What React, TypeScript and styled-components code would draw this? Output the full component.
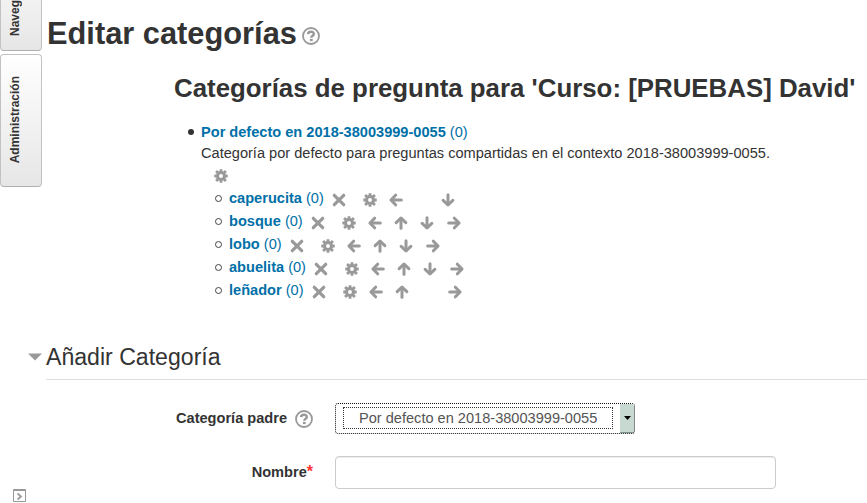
import React from "react";
import styled, { createGlobalStyle } from "styled-components";

const Global = createGlobalStyle`
  * { box-sizing: border-box; }
  html, body { margin: 0; height: 503px; overflow: hidden; background: #fff; }
  body { font: 14.58px/20px "Liberation Sans", Arial, sans-serif; color: #333; }
`;

const Page = styled.div`
  display: flex;
  height: 503px;
  overflow: hidden;
`;

const Dock = styled.aside`
  width: 46px;
  flex: none;
  display: flex;
  flex-direction: column;
`;

const DockTab = styled.div<{ $height: number; $first?: boolean }>`
  width: 42px;
  height: ${(p) => p.$height}px;
  margin-bottom: 3px;
  padding-left: 7px;
  display: flex;
  align-items: center;
  justify-content: flex-start;
  border: 1px solid #c2c2c2;
  border-top-width: ${(p) => (p.$first ? 0 : 1)}px;
  border-bottom-color: #b0b0b0;
  border-radius: ${(p) => (p.$first ? "0 0 4px 4px" : "4px")};
  background: linear-gradient(${(p) => (p.$first ? "#f2f2f2" : "#fff")}, #e6e6e6);
`;

const DockTitle = styled.span<{ $end?: boolean }>`
  writing-mode: vertical-rl;
  transform: rotate(180deg);
  align-self: ${(p) => (p.$end ? "flex-end" : "center")};
  padding: ${(p) => (p.$end ? "14px 0 0" : "2px 0 0")};
  font-size: 12px;
  line-height: 14px;
  font-weight: bold;
  white-space: nowrap;
`;

const DockFooter = styled.div`
  margin: auto 0 1px 13px;
  height: 13px;
  svg { display: block; }
`;

const Main = styled.main`
  flex: 1;
  min-width: 0;
`;

const PageTitle = styled.h1`
  display: flex;
  align-items: center;
  gap: 5px;
  height: 40px;
  margin: 14px 0 0 1px;
  font-size: 30.8px;
  line-height: 40px;
  white-space: nowrap;
  svg { margin-top: 4px; }
`;

const SectionTitle = styled.h2`
  margin: 14px 0 0 128px;
  font-size: 25.85px;
  line-height: 40px;
  white-space: nowrap;
`;

const RootCategory = styled.section`
  display: grid;
  grid-template-columns: 13px 1fr;
  margin: 14px 0 0 142px;
`;

const Bullet = styled.i<{ $hollow?: boolean }>`
  flex: none;
  width: ${(p) => (p.$hollow ? 7 : 6)}px;
  height: ${(p) => (p.$hollow ? 7 : 6)}px;
  margin-top: ${(p) => (p.$hollow ? 2 : 7)}px;
  border-radius: 50%;
  border: ${(p) => (p.$hollow ? "1px solid #444" : "0")};
  background: ${(p) => (p.$hollow ? "transparent" : "#333")};
`;

const CategoryLink = styled.a`
  color: #0070a8;
  white-space: pre;
`;

const Description = styled.p`
  margin: 1px 0 0;
  white-space: nowrap;
`;

const RootTools = styled.div`
  height: 23px;
  padding: 6px 0 0 13px;
  svg { display: block; }
`;

const CategoryList = styled.ul`
  list-style: none;
  margin: 0;
  padding: 0 0 0 14px;
`;

const CategoryRow = styled.li`
  display: flex;
  align-items: center;
  height: 23px;
  ${CategoryLink} { margin: 0 8px 0 7px; }
`;

const ToolSlot = styled.span<{ $wide?: boolean }>`
  flex: none;
  width: ${(p) => (p.$wide ? 31 : 26)}px;
  height: 14px;
  margin-top: 4px;
  svg { display: block; }
  &:last-child { margin-left: 1px; }
`;

const Legend = styled.h3`
  display: flex;
  align-items: center;
  gap: 4px;
  height: 45px;
  margin: 34px 0 0;
  border-bottom: 1px solid #ddd;
  font-size: 23.1px;
  font-weight: normal;
  white-space: nowrap;
  svg { margin-left: -18px; flex: none; }
`;

const FormRow = styled.div<{ $top: number }>`
  display: grid;
  grid-template-columns: 267px 1fr;
  column-gap: 22px;
  align-items: center;
  margin-top: ${(p) => p.$top}px;
`;

const Label = styled.label`
  display: flex;
  justify-content: flex-end;
  align-items: center;
  padding-bottom: 1px;
  font-weight: bold;
  white-space: nowrap;
  svg { margin: 1px 0 0 8px; }
`;

const Required = styled.span`
  color: #f33;
  font-size: 16px;
`;

const Select = styled.div`
  display: flex;
  justify-content: space-between;
  width: 300px;
  height: 31px;
  border: 1px dotted #111;
  border-radius: 3px;
  color: #555;
`;

const SelectValue = styled.span`
  width: 270px;
  height: 22px;
  margin: 3px 0 0 7px;
  padding-left: 15px;
  border: 1px dotted #333;
  white-space: nowrap;
`;

const SelectArrow = styled.span`
  display: flex;
  align-items: center;
  justify-content: center;
  width: 14px;
  background: #c8d9d2;
  border-bottom: 1px solid #7d918a;
`;

const TextInput = styled.input`
  width: 441px;
  height: 33px;
  padding: 4px 6px;
  border: 1px solid #ccc;
  border-radius: 4px;
  background: #fff;
  box-shadow: inset 0 1px 1px rgba(0, 0, 0, 0.075);
  outline: none;
`;

const HelpIcon = () => (
  <svg width="18" height="18" viewBox="0 0 18 18" fill="none" stroke="#999">
    <circle cx="9" cy="9" r="8" strokeWidth="1.8" />
    <path d="M6.1 7.1C6.2 4.2 11.8 3.9 11.8 6.9C11.8 8.9 9.3 8.6 9.3 10.8" strokeWidth="2.5" />
    <path d="M7.9 13h2.8" strokeWidth="2.2" />
  </svg>
);

type Tool = "delete" | "gear" | "left" | "up" | "down" | "right";

const rotation = { left: 0, up: 90, right: 180, down: 270 };

const ToolIcon = ({ tool }: { tool: Tool }) => {
  if (tool === "gear")
    return (
      <svg width="14" height="14" viewBox="0 0 14 14" fill="none" stroke="#999">
        <circle cx="7" cy="7" r="3.5" strokeWidth="3.1" />
        <path d="M7 .3v2.6M7 11.1v2.6M.3 7h2.6M11.1 7h2.6M2.1 2.1l2 2M9.9 9.9l2 2M2.1 11.9l2-2M9.9 4.1l2-2" strokeWidth="2.8" />
      </svg>
    );
  if (tool === "delete")
    return (
      <svg width="14" height="14" viewBox="0 0 14 14" stroke="#999" strokeWidth="3.2" strokeLinecap="round">
        <path d="M2.3 2.3l9.4 9.4M11.7 2.3L2.3 11.7" />
      </svg>
    );
  return (
    <svg width="14" height="14" viewBox="0 0 14 14" fill="none" stroke="#999" strokeWidth="3">
      <g transform={`rotate(${rotation[tool]} 7 7)`}>
        <path d="M2.5 7H12.3" strokeLinecap="round" />
        <path d="M6.6 2.2L2 7l4.6 4.8" strokeLinecap="round" strokeLinejoin="round" />
      </g>
    </svg>
  );
};

const categories: { name: string; tools: (Tool | null)[] }[] = [
  { name: "caperucita", tools: ["delete", "gear", "left", null, "down", null] },
  { name: "bosque", tools: ["delete", "gear", "left", "up", "down", "right"] },
  { name: "lobo", tools: ["delete", "gear", "left", "up", "down", "right"] },
  { name: "abuelita", tools: ["delete", "gear", "left", "up", "down", "right"] },
  { name: "leñador", tools: ["delete", "gear", "left", "up", null, "right"] },
];

export default function App() {
  return (
    <>
      <Global />
      <Page>
        <Dock>
          <DockTab $height={51} $first>
            <DockTitle $end>Naveg</DockTitle>
          </DockTab>
          <DockTab $height={133}>
            <DockTitle>Administración</DockTitle>
          </DockTab>
          <DockFooter>
            <svg width="13" height="13" viewBox="0 0 13 13" fill="none" stroke="#999">
              <path d="M.5.5h12v12H.5zM0 1.5h13" />
              <path d="M4.5 4.5l3.5 3-3.5 3" strokeWidth="1.7" />
            </svg>
          </DockFooter>
        </Dock>
        <Main>
          <PageTitle>
            Editar categorías
            <HelpIcon />
          </PageTitle>
          <SectionTitle>Categorías de pregunta para 'Curso: [PRUEBAS] David'</SectionTitle>
          <RootCategory>
            <Bullet />
            <div>
              <CategoryLink>
                <b>Por defecto en 2018-38003999-0055</b> (0)
              </CategoryLink>
              <Description>
                Categoría por defecto para preguntas compartidas en el contexto 2018-38003999-0055.
              </Description>
              <RootTools>
                <ToolIcon tool="gear" />
              </RootTools>
              <CategoryList>
                {categories.map(({ name, tools }) => (
                  <CategoryRow key={name}>
                    <Bullet $hollow />
                    <CategoryLink>
                      <b>{name}</b> (0)
                    </CategoryLink>
                    {tools.map((tool, i) => (
                      <ToolSlot key={i} $wide={i === 0}>
                        {tool && <ToolIcon tool={tool} />}
                      </ToolSlot>
                    ))}
                  </CategoryRow>
                ))}
              </CategoryList>
            </div>
          </RootCategory>
          <Legend>
            <svg width="14" height="8" viewBox="0 0 14 8">
              <path d="M0 .5h14L7 7.5z" fill="#999" />
            </svg>
            Añadir Categoría
          </Legend>
          <FormRow $top={23}>
            <Label>
              Categoría padre
              <HelpIcon />
            </Label>
            <Select>
              <SelectValue>Por defecto en 2018-38003999-0055</SelectValue>
              <SelectArrow>
                <svg width="7" height="4" viewBox="0 0 7 4">
                  <path d="M0 0h7L3.5 4z" fill="#000" />
                </svg>
              </SelectArrow>
            </Select>
          </FormRow>
          <FormRow $top={22}>
            <Label>
              Nombre<Required>*</Required>
            </Label>
            <TextInput />
          </FormRow>
        </Main>
      </Page>
    </>
  );
}
